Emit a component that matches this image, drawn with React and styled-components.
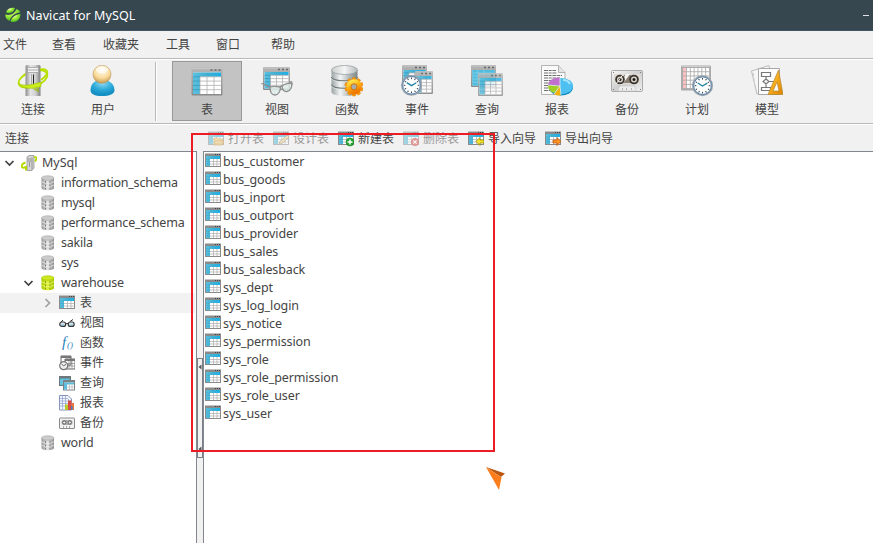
import React from 'react';
import styled, { createGlobalStyle } from 'styled-components';

const GlobalStyle = createGlobalStyle`
  * { box-sizing: border-box; }
  body { margin: 0; overflow: hidden; background: #fff; }
`;

const uiFont = `'Noto Sans', 'Noto Sans CJK SC', sans-serif`;

const Window = styled.div`
  position: relative;
  width: 873px;
  height: 543px;
  display: flex;
  flex-direction: column;
  overflow: hidden;
  background: #f1f1f1;
  color: #444;
  font: 12px/18px ${uiFont};
  white-space: nowrap;
`;

const TitleBar = styled.header`
  height: 31px;
  flex: none;
  display: flex;
  align-items: center;
  padding: 0 4px 0 5px;
  gap: 5px;
  background: #37474f;
  border-bottom: 1px solid #3c5560;
  color: #fff;
`;

const Title = styled.h1`
  flex: 1;
  margin: 0;
  padding-top: 2px;
  font-size: 12.5px;
  font-weight: 400;
  letter-spacing: 0.08px;
`;

const Minimize = styled.span`
  width: 6px;
  height: 1px;
  background: #dfe3e5;
`;

const MenuBar = styled.nav`
  height: 29px;
  flex: none;
  display: flex;
  align-items: center;
  gap: 24px;
  padding: 0 3px 1px;
  border-bottom: 1px solid #fff;
  box-shadow: inset 0 -1px #b9b9b9;
`;

const MenuItem = styled.span`
  width: ${(p) => p.$width}px;
  flex: none;
`;

const ToolBar = styled.div`
  height: 65px;
  flex: none;
  display: flex;
  align-items: flex-start;
  padding: 1px 0 0;
  border-bottom: 1px solid #fff;
  box-shadow: inset 0 -1px #b9b9b9;
`;

const ToolButton = styled.button`
  width: 70px;
  height: 60px;
  padding: 3px 0 0;
  display: flex;
  flex-direction: column;
  align-items: center;
  gap: 4px;
  border: 1px solid ${(p) => (p.$active ? '#999' : 'transparent')};
  background: ${(p) => (p.$active ? '#c3c3c3' : 'transparent')};
  color: inherit;
  font: inherit;
`;

const ToolGroup = styled.div`
  display: flex;
  margin-left: ${(p) => p.$offset}px;
`;

const Separator = styled.span`
  width: 2px;
  height: 59px;
  margin: 1px 0 0 17px;
  background: linear-gradient(to right, #b9b9b9 50%, #fff 50%);
`;

const ActionBar = styled.div`
  height: 26px;
  flex: none;
  display: flex;
  align-items: center;
  padding: 1px 0 0 5px;
`;

const PaneTitle = styled.span`
  width: 203px;
`;

const Action = styled.span`
  display: flex;
  align-items: center;
  gap: 4px;
  margin-right: 9px;
  opacity: ${(p) => (p.$disabled ? 0.5 : 1)};
`;

const Workspace = styled.main`
  flex: 1;
  display: flex;
  min-height: 0;
`;

const Tree = styled.aside`
  width: 197px;
  padding-top: 1px;
  background: #fff;
  border-top: 1px solid #828790;
  border-right: 1px solid #828790;
`;

const TreeRow = styled.div`
  width: 195px;
  height: 20px;
  display: flex;
  align-items: center;
  padding-left: ${(p) => 3 + p.$level * 19}px;
  background: ${(p) => (p.$selected ? '#f2f2f2' : 'transparent')};
`;

const Toggle = styled.span`
  width: 18px;
  height: 14px;
  display: flex;
`;

const Label = styled.span`
  margin-left: ${(p) => p.$gap}px;
  font-size: ${(p) => (p.$cjk ? 12 : 12.5)}px;
  letter-spacing: ${(p) => p.$tracking || 0}px;
`;

const Splitter = styled.div`
  width: 6px;
  display: flex;
  padding-top: 207px;
`;

const Grip = styled.div`
  width: 6px;
  height: 100px;
  display: flex;
  flex-direction: column;
  justify-content: space-between;
  align-items: center;
  padding: 4px 0;
  border: 1px solid #7b7f86;
`;

const TableList = styled.section`
  flex: 1;
  padding: 1px 0 0 1px;
  background: #fff;
  border-top: 1px solid #828790;
  border-left: 1px solid #828790;
`;

const TableRow = styled.div`
  height: 18px;
  display: flex;
  align-items: center;

  svg { margin-bottom: 2px; }
`;

const HighlightFrame = styled.div`
  position: absolute;
  left: 191px;
  top: 133px;
  width: 304px;
  height: 319px;
  border: 2px solid #ed1c24;
`;

const Pointer = styled.svg`
  position: absolute;
  left: 485px;
  top: 465px;
`;

const Svg = styled.svg`
  display: block;
  flex: none;
`;

const HiddenDefs = styled.svg`
  position: absolute;
`;

const Grad = ({ id, stops, ...rest }) => (
  <linearGradient id={id} {...rest}>
    {stops.map((c, i) => (
      <stop key={i} offset={i / (stops.length - 1)} stopColor={c} />
    ))}
  </linearGradient>
);

const Defs = () => (
  <HiddenDefs width="0" height="0">
    <defs>
      <Grad id="blue" stops={['#5cc0de', '#3fafd3', '#1bb0e8']} x2="1" y2="0" />
      <Grad id="steel" stops={['#9aa2a2', '#f4f6f6', '#b3baba', '#7c8484']} x2="1" y2="0" />
      <Grad id="cap" stops={['#c9cdcd', '#f4f5f5', '#b5bbbb']} x2="1" y2="0" />
      <Grad id="server" stops={['#8e8e8e', '#e4e4e4', '#d0d0d0', '#808080']} x2="1" y2="0" />
      <Grad id="gear" stops={['#ffe34a', '#ffab0a', '#f07800']} x1="0.2" y1="0" x2="0.6" y2="1" />
      <Grad id="lime" stops={['#a9c800', '#e0f040', '#a4c400']} x2="1" y2="0" />
      <Grad id="grayDb" stops={['#969696', '#e6e6e6', '#8c8c8c']} x2="1" y2="0" />
      <Grad id="tape" stops={['#f8f8f8', '#cfcfcf', '#f0f0f0']} x2="1" y2="1" />
      <Grad id="gold" stops={['#ffd970', '#f5a91c', '#d98200']} x2="1" y2="1" />
      <Grad id="frame" stops={['#b8b8b8', '#8a8a8a']} x2="0" y2="1" />
      <radialGradient id="head" cx="0.5" cy="0.25" r="0.75">
        <stop offset="0" stopColor="#fffdf2" />
        <stop offset="0.6" stopColor="#fbdc9c" />
        <stop offset="1" stopColor="#c59a55" />
      </radialGradient>
      <radialGradient id="body" cx="0.5" cy="0.2" r="0.7">
        <stop offset="0" stopColor="#8fd9f3" />
        <stop offset="0.6" stopColor="#2ba9d8" />
        <stop offset="1" stopColor="#138fc2" />
      </radialGradient>
      <radialGradient id="leaf" cx="0.3" cy="0.2" r="0.95">
        <stop offset="0" stopColor="#f0ffc0" />
        <stop offset="0.45" stopColor="#9bea35" />
        <stop offset="1" stopColor="#25a51c" />
      </radialGradient>
    </defs>
  </HiddenDefs>
);

const Icon = ({ size = 32, top = 0, children }) => (
  <Svg width={size} height={size} viewBox={`0 ${top} ${size} ${size}`}>
    {children}
  </Svg>
);

/* A window with a title strip, blue header cells and a white data grid. */
const Sheet = ({ x, y, w, h, cols = 4, rows = 5, opacity = 1 }) => {
  const iw = w - 3;
  const ih = h - 6.5;
  const cw = iw / cols;
  const rh = ih / rows;
  return (
    <g transform={`translate(${x} ${y})`} opacity={opacity}>
      <rect width={w} height={h} rx="1" fill="url(#frame)" />
      <rect x="0.5" y="0.5" width={w - 1} height="1" fill="#c8c8c8" />
      <path d={`M${w - 12} 2.500h2m2 0h2m2 0h2`} stroke="#666" strokeWidth="1.600" />
      <rect x="1.5" y="5" width={iw} height={ih} fill="#fff" />
      <path d={`M1.5 5h${iw}v${rh}H${1.5 + cw}v${ih - rh}H1.5z`} fill="url(#blue)" />
      {Array.from({ length: cols - 1 }, (_, i) => (
        <path key={i} d={`M${1.5 + cw * (i + 1)} ${5 + rh}v${ih - rh}`} stroke="#b0b0b0" strokeWidth="0.8" />
      ))}
      {Array.from({ length: rows - 1 }, (_, i) => (
        <g key={i}>
          <path d={`M1.5 ${5 + rh * (i + 1)}h${cw}`} stroke="#2b8fb5" strokeWidth="0.6" />
          <path d={`M${1.5 + cw} ${5 + rh * (i + 1)}h${iw - cw}`} stroke="#b0b0b0" strokeWidth="0.8" />
        </g>
      ))}
    </g>
  );
};

const Clock = ({ cx, cy, r }) => (
  <g transform={`translate(${cx} ${cy}) scale(${r / 10})`}>
    <circle r="9.3" fill="#fdfefe" stroke="#98a2aa" strokeWidth="1.4" />
    <circle r="8.4" fill="none" stroke="#4c77a5" strokeWidth="0.9" />
    {Array.from({ length: 12 }, (_, i) => (
      <path key={i} d="M0-7.4v1.5" stroke="#273640" strokeWidth="0.9" transform={`rotate(${i * 30})`} />
    ))}
    <path d="M-4.5-2.6L0 .3L4.6-2.4" fill="none" stroke="#2385a5" strokeWidth="1.3" />
  </g>
);

const ConnectIcon = () => (
  <Icon>
    <ellipse cx="16" cy="14" rx="15" ry="7.5" transform="rotate(-20 16 14)" fill="none" stroke="#b7df00" strokeWidth="1.8" />
    <path d="M8.5 1L9.5 0h13l1 1V31h-15z" fill="url(#server)" />
    <path d="M10.5 2.5h11v5h-11z" fill="#f2f2f2" stroke="#9a9a9a" strokeWidth="0.7" />
    <path d="M10.5 5h11M14.500 9v14" stroke="#999" strokeWidth="0.8" />
    <path d="M16.500 9.500v10" stroke="#222" strokeWidth="1" />
    <path d="M23 4.500C30 3 33 7 27 12.500L24 15" fill="none" stroke="#b7df00" strokeWidth="1.800" />
    <path d="M2 18.500C6 21.500 15 20 24 17v4.500C15 24.500 5 24 2 18.500z" fill="#c9ec1a" stroke="#9cc200" strokeWidth="0.600" />
    <path d="M16.500 24h2.500v2m2-3v4" fill="none" stroke="#8fb800" strokeWidth="1.200" />
  </Icon>
);

const UserIcon = () => (
  <Icon>
    <path d="M3.5 25C4 18 8 15 15 15s12 3 12.500 10c0 4-5 6-12.500 6S3.500 29 3.500 25z" fill="url(#body)" />
    <circle cx="15" cy="9.300" r="9" fill="url(#head)" stroke="#b58e50" strokeWidth="0.500" />
    <ellipse cx="15" cy="5" rx="6" ry="3.500" fill="#fff" opacity="0.600" />
  </Icon>
);

const TableIcon = () => (
  <Icon>
    <Sheet x={0.5} y={2.5} w={31} h={28} />
  </Icon>
);

const ViewIcon = () => (
  <Icon>
    <Sheet x={2} y={2} w={27} h={23} />
    <g fill="#dcebe9" fillOpacity="0.850" stroke="#909090" strokeWidth="1.300">
      <path d="M0.500 19C2 17.500 4 21 9 22M29 17c2-1 2 0 2 3" fill="none" />
      <path d="M9 22c3-1 7-.5 10.500 0c0 4-2 8-5.500 8s-5-4-5-8z" />
      <path d="M21 20.500c3-1.500 6-2.500 9.500-2.500c1 4-1 8-4.500 8.500s-5-2.500-5-6z" />
      <path d="M19 23q1-3 2.500-1.500" fill="none" />
    </g>
  </Icon>
);

const FunctionIcon = () => (
  <Icon>
    <path d="M0.500 5v22c0 5.300 26 5.300 26 0V5z" fill="url(#steel)" />
    <path d="M0.500 12c0 5 26 5 26 0M0.500 19.500c0 5 26 5 26 0" fill="none" stroke="#727a7a" strokeWidth="1.200" />
    <path d="M0.500 13.200c0 5 26 5 26 0M0.500 20.700c0 5 26 5 26 0" fill="none" stroke="#e5e9e9" strokeWidth="0.700" />
    <ellipse cx="13.500" cy="5" rx="13" ry="4.500" fill="url(#cap)" stroke="#929999" strokeWidth="0.700" />
    <g transform="translate(23 21.800)">
      {Array.from({ length: 10 }, (_, i) => (
        <rect key={i} x="-1.700" y="-9.300" width="3.400" height="4" rx="0.700" fill="#f89a0b" stroke="#df7700" strokeWidth="0.400" transform={`rotate(${i * 36})`} />
      ))}
      <circle r="5.400" fill="none" stroke="url(#gear)" strokeWidth="4.500" />
      <circle r="3" fill="#a6adaf" stroke="#d76b00" strokeWidth="0.900" />
    </g>
  </Icon>
);

const EventIcon = () => (
  <Icon>
    <Sheet x={1} y={0} w={25} h={21} />
    <Sheet x={14} y={6} w={18} h={23} cols={3} opacity={0.9} />
    <Clock cx={10.5} cy={20.3} r={10.5} />
  </Icon>
);

const QueryIcon = () => (
  <Icon>
    <Sheet x={0} y={0} w={25} h={22} />
    <path d="M1.500 5h22v15.500h-22z" fill="#52bcdd" />
    <path d="M1.500 8h22M1.500 11h22M1.500 14h22M1.500 17h22M7 5v15M13 5v15" stroke="#94d8ec" strokeWidth="0.600" />
    <Sheet x={7} y={8} w={25} h={23} opacity={0.8} />
  </Icon>
);

const ReportIcon = () => (
  <Icon>
    <path d="M0.500 0.500h17l6.500 7v22H0.500z" fill="#fafafa" stroke="#b4b4b4" />
    <path d="M17.500 0.500v7H24" fill="#e4e4e4" stroke="#999" strokeWidth="0.700" />
    <path d="M3 5.500h12M3 8h13M3 10.500h18M3 13h16M3 15.500h7M3 18h5M3 20.500h5M3 23h6M3 25.500h7" stroke="#707070" strokeWidth="1" strokeDasharray="4 0.700 3 0.700" />
    <ellipse cx="20" cy="22.500" rx="12" ry="8" fill="#168fc5" />
    <ellipse cx="20" cy="21" rx="12" ry="8" fill="#4dbff0" />
    <path d="M19 21V12.500C12 12.500 7 16 7 20z" fill="#c070cf" />
    <path d="M19 21L7 20c0 4 2 6.500 6 8z" fill="#a0d024" />
    <path d="M19 21l-6 8c2 1.500 5 1.700 6.500 1.500z" fill="#f2b20d" />
    <path d="M19 12.500V21L7 20M19 21l-6 8M19 21l1 9" fill="none" stroke="#fff" strokeWidth="0.600" />
    <path d="M22 15q5 0 7 4" fill="none" stroke="#a6e4fc" strokeWidth="2" />
  </Icon>
);

const BackupIcon = () => (
  <Icon>
    <rect x="0.500" y="5.500" width="31" height="21" rx="1" fill="url(#tape)" stroke="#aaa" />
    <path d="M3 9h26v10H3z" fill="#dedad4" />
    <path d="M13 10h7v8h-7z" fill="#8a8174" />
    <path d="M8 20L15 9h4l-8 11z" fill="#f4f4f4" />
    {[9, 23].map((cx) => (
      <g key={cx}>
        <circle cx={cx} cy="14.500" r="4.800" fill="#3a342e" />
        <circle cx={cx} cy="14.500" r="3" fill="#d8d3ca" />
        <circle cx={cx} cy="14.500" r="1.500" fill="#1c1a18" />
      </g>
    ))}
    <path d="M5 19l4-5M12 9.500l-3 4" stroke="#eee" />
    <path d="M7 26l1.500-5h15l1.500 5z" fill="#ededed" stroke="#c4c4c4" strokeWidth="0.600" />
    <path d="M11 24h1m3 0h1m4 0h1M2 7.500h1m26 0h1M2 24.500h1m26 0h1" stroke="#777" strokeWidth="1.200" />
  </Icon>
);

const ScheduleIcon = () => (
  <Icon>
    <rect x="0" y="0.500" width="30" height="25" rx="1" fill="#ababab" />
    <path d="M1 1.500h28" stroke="#ccc" />
    {Array.from({ length: 5 }, (_, r) =>
      Array.from({ length: 7 }, (_, c) => (
        <rect key={`${r}-${c}`} x={2 + c * 3.85} y={3 + r * 4.2} width="3" height="3.3" fill={c ? '#fff' : '#ffc0c3'} />
      ))
    )}
    <Clock cx={21.5} cy={20.7} r={10.5} />
  </Icon>
);

const ModelIcon = () => (
  <Icon>
    <path d="M0.500 6L18 0.500l5 25L6 29z" fill="#f6f6f6" stroke="#bbb" />
    <path d="M2.500 8v3m.5 2v3m.5 2v3" stroke="#ccc" />
    <path d="M7.500 3.500h21v26h-21z" fill="#fcfcfc" stroke="#a8a8a8" />
    <path d="M10.500 7.500h9v4h-9zM15 11.500v2.500m0 5v3.500M10.500 22.500h9v3h-9zM15 14l3 2.500l-3 2.500l-3-2.500zM18 16.500h5" fill="none" stroke="#777" strokeWidth="1.200" />
    <path fillRule="evenodd" d="M27.500 5L32 29.500H17zM26 17l-4 9h6z" fill="url(#gold)" stroke="#b8862e" strokeWidth="0.700" />
  </Icon>
);

/* 16px glyphs used by the tree, the list and the action bar. */
const SmallSheet = ({ children }) => (
  <Icon size={16} top={1}>
    <path d="M0 1h16v14H0z" fill="#8a8a8a" />
    <path d="M0 1h16v1H0z" fill="#c3c3c3" />
    <path d="M10 2.500h1m1 0h1m1 0h1" stroke="#444" strokeWidth="1" />
    <path d="M1 4h14v10H1z" fill="#fff" />
    <path d="M1 4h14v3H5v7H1z" fill="url(#blue)" />
    <path d="M5 9.500h10M5 12h10M8.500 7v7M12 7v7" stroke="#b4b4b4" strokeWidth="0.800" />
    <path d="M1 7h4M1 9.500h4M1 12h4" stroke="#3a9fc0" strokeWidth="0.500" />
    {children}
  </Icon>
);

const badges = {
  open: <path d="M6 8h4l1 1h4v5H6zM7 11h9l-1.500 4H6z" fill="#f3cd74" stroke="#b98a32" strokeWidth="0.700" />,
  design: <path d="M6 14.500l1-3L14 5l2 2l-7 6.500z" fill="#ead18a" stroke="#8d795b" strokeWidth="0.800" />,
  create: (
    <g>
      <circle cx="12" cy="12" r="4" fill="#27a32f" stroke="#137b1c" strokeWidth="0.500" />
      <path d="M12 9.500v5M9.500 12h5" stroke="#fff" strokeWidth="1.400" />
    </g>
  ),
  remove: (
    <g>
      <circle cx="12" cy="12" r="3.800" fill="#d84040" stroke="#a92c2c" strokeWidth="0.500" />
      <path d="M10.300 10.300l3.400 3.400m0-3.400l-3.400 3.400" stroke="#fff" strokeWidth="1.200" />
    </g>
  ),
  importing: <path d="M8 11.500l4-4v2.500h4v3h-4v2.500z" fill="#f4e42c" stroke="#8c8200" strokeWidth="0.700" />,
  exporting: <path d="M16 11.500l-4-4v2.500H8v3h4v2.500z" fill="#ff9425" stroke="#b44b00" strokeWidth="0.700" />,
};

const Database = ({ active }) => (
  <Icon size={16}>
    <path d="M1.500 3v10c0 3 12.500 3 12.500 0V3z" fill={active ? 'url(#lime)' : 'url(#grayDb)'} />
    <ellipse cx="7.750" cy="3" rx="6.250" ry="2.200" fill={active ? '#cfe81f' : '#ccc'} stroke={active ? '#a8c900' : '#aaa'} strokeWidth="0.700" />
    <path d="M1.500 6.500c2 2 10.500 2 12.500 0M1.500 10c2 2 10.500 2 12.500 0" fill="none" stroke={active ? '#f2ff94' : '#f3f3f3'} strokeWidth="0.700" />
    <path d="M5.500 6v8.500M10 6v8.500" stroke={active ? '#7f9f00' : '#777'} strokeWidth="0.900" strokeDasharray="2 1.500" />
  </Icon>
);

const Server = () => (
  <Icon size={16}>
    <path d="M6 2l2-1.500h5V13l-2 2.500H6z" fill="#d4d4d4" stroke="#888" strokeWidth="0.700" />
    <path d="M6.500 4h4M6.500 6h4M8.500 7v5M11 2.500v12" stroke="#888" strokeWidth="0.800" />
    <path d="M4.500 7.500C1 8.500 0 11 1 12s3 .5 4 0v3.500" fill="none" stroke="#b5d900" strokeWidth="2" />
    <path d="M13 2.500c3-1.500 3 1 1 4" fill="none" stroke="#b5d900" strokeWidth="1.800" />
  </Icon>
);

const Glasses = () => (
  <Icon size={16}>
    <path d="M1 8l3-3M11 6.500l3-2M7 9q1-1.500 2 0" fill="none" stroke="#333" strokeWidth="1" />
    <rect x="0.800" y="7" width="5.800" height="4.400" rx="2" fill="#ddeaf0" stroke="#333" strokeWidth="1.200" />
    <rect x="9.300" y="7" width="5.800" height="4.400" rx="2" fill="#ddeaf0" stroke="#333" strokeWidth="1.200" />
    <path d="M2 10h3M11 10h3" stroke="#73afd0" />
  </Icon>
);

const FxText = styled.text`
  font: italic ${(p) => p.$size}px 'Liberation Serif', serif;
  fill: #2b83bd;
`;

const Fx = () => (
  <Icon size={16}>
    <FxText x="3" y="12" $size={15}>f</FxText>
    <FxText x="8" y="13" $size={9}>()</FxText>
  </Icon>
);

const SmallEvent = () => (
  <Icon size={16}>
    <path d="M2 1h10v9H2zM6 4h10v10H6z" fill="#fff" stroke="#666" />
    <path d="M2 2h10M6 5h10" stroke="#777" strokeWidth="2" />
    <path d="M8 8.500h8M8 11h8M10 6v8M13 6v8" stroke="#888" strokeWidth="0.700" />
    <circle cx="4.700" cy="10.700" r="4" fill="#eee" stroke="#777" strokeWidth="1.200" />
    <path d="M2.500 9l2 1.700L7 9.500" fill="none" stroke="#444" strokeWidth="0.800" />
  </Icon>
);

const SmallQuery = () => (
  <Icon size={16}>
    <path d="M0 1h12v10H0z" fill="#6e7779" />
    <path d="M1 3.500h10V10H1z" fill="#56bcda" />
    <path d="M1 5.500h10M1 8h10M4 3.500V10M8 3.500V10" stroke="#97dced" strokeWidth="0.500" />
    <path d="M4 5h12v10.500H4z" fill="#788184" />
    <path d="M5 7.500h10v7H5z" fill="#fff" />
    <path d="M5 7.500h10v2H8v5H5z" fill="#5dbddb" />
    <path d="M8 12h7M10.500 9.500v5M13 9.500v5" stroke="#aaa" strokeWidth="0.600" />
  </Icon>
);

const SmallReport = () => (
  <Icon size={16}>
    <path d="M.5 .5h8.500l3.500 3.500v11H.5z" fill="#f3f6fc" stroke="#8795bc" />
    <path d="M1 3.500h8M1 6h11M1 8.500h11M1 11h8M3.500 1v13M6.500 1v13M9.500 4v11" stroke="#9aaad0" strokeWidth="0.800" />
    <path d="M6 9.500h3V15H6z" fill="#b5c82c" />
    <path d="M9 5.500h3.500V15H9z" fill="#d94d45" />
    <path d="M12.500 8H15v7h-2.500z" fill="#e7773e" />
    <path d="M12 11h1.500v4H12z" fill="#3e80c8" />
  </Icon>
);

const SmallBackup = () => (
  <Icon size={16}>
    <rect x="0.500" y="3" width="15" height="10.500" rx="0.500" fill="#f2f2f2" stroke="#8a8a8a" />
    <rect x="2.500" y="5" width="11" height="5" rx="2" fill="#aaa" />
    <circle cx="5.200" cy="7.500" r="1.600" fill="#eee" stroke="#555" strokeWidth="0.900" />
    <circle cx="10.800" cy="7.500" r="1.600" fill="#eee" stroke="#555" strokeWidth="0.900" />
    <path d="M4 12h1m2 0h1m2 0h1" stroke="#666" />
  </Icon>
);

const Logo = () => (
  <Icon size={16}>
    <path d="M1 5.500C2 1.500 6 0 10 1C9 5 5 7.500 1 5.500z" fill="url(#leaf)" />
    <path d="M.3 7.500C6 9 10 6 11.500 2C14 3 15 4 15.300 5.500C10 6 6 9 4.500 14C1.500 12.500 0 10 .3 7.500z" fill="url(#leaf)" />
    <path d="M5.500 14.500C6.500 10.500 10 7.500 15.500 7C15.500 12.500 10.500 16.500 5.500 14.500z" fill="url(#leaf)" />
  </Icon>
);

const Chevron = ({ open }) => (
  <Svg width="14" height="14" viewBox="0 0 14 14">
    <path
      d={open ? 'M2.500 5L6.500 9L10.500 5' : 'M4.500 3L8.500 7L4.500 11'}
      fill="none"
      stroke={open ? '#404040' : '#a0a0a0'}
      strokeWidth="1.700"
    />
  </Svg>
);

const GripArrow = () => (
  <Svg width="4" height="8" viewBox="0 0 4 8">
    <path d="M3.500 1.500v5L.5 4z" fill="#555" />
  </Svg>
);

const menus = [['文件', 25], ['查看', 27], ['收藏夹', 39], ['工具', 26], ['窗口', 31], ['帮助', 24]];
const connectTools = [['连接', ConnectIcon], ['用户', UserIcon]];
const objectTools = [
  ['表', TableIcon], ['视图', ViewIcon], ['函数', FunctionIcon], ['事件', EventIcon], ['查询', QueryIcon],
  ['报表', ReportIcon], ['备份', BackupIcon], ['计划', ScheduleIcon], ['模型', ModelIcon],
];
const actions = [
  ['打开表', 'open', true], ['设计表', 'design', true], ['新建表', 'create'],
  ['删除表', 'remove', true], ['导入向导', 'importing'], ['导出向导', 'exporting'],
];
const tree = [
  { label: 'MySql', level: 0, icon: Server, open: true },
  ...['information_schema', 'mysql', 'performance_schema', 'sakila', 'sys'].map((label) => ({ label, level: 1, icon: Database })),
  { label: 'warehouse', level: 1, icon: Database, open: true },
  { label: '表', level: 2, icon: SmallSheet, open: false, selected: true },
  { label: '视图', level: 2, icon: Glasses },
  { label: '函数', level: 2, icon: Fx },
  { label: '事件', level: 2, icon: SmallEvent },
  { label: '查询', level: 2, icon: SmallQuery },
  { label: '报表', level: 2, icon: SmallReport },
  { label: '备份', level: 2, icon: SmallBackup },
  { label: 'world', level: 1, icon: Database },
];
const tables = [
  'bus_customer', 'bus_goods', 'bus_inport', 'bus_outport', 'bus_provider', 'bus_sales', 'bus_salesback', 'sys_dept',
  'sys_log_login', 'sys_notice', 'sys_permission', 'sys_role', 'sys_role_permission', 'sys_role_user', 'sys_user',
];

export default function App() {
  return (
    <Window>
      <GlobalStyle />
      <Defs />
      <TitleBar>
        <Logo />
        <Title>Navicat for MySQL</Title>
        <Minimize />
      </TitleBar>
      <MenuBar>
        {menus.map(([label, width]) => (
          <MenuItem key={label} $width={width}>{label}</MenuItem>
        ))}
      </MenuBar>
      <ToolBar>
        <ToolGroup $offset={-2}>
          {connectTools.map(([label, Glyph]) => (
            <ToolButton key={label}><Glyph />{label}</ToolButton>
          ))}
        </ToolGroup>
        <Separator />
        <ToolGroup $offset={15}>
          {objectTools.map(([label, Glyph], i) => (
            <ToolButton key={label} $active={i === 0}><Glyph />{label}</ToolButton>
          ))}
        </ToolGroup>
      </ToolBar>
      <ActionBar>
        <PaneTitle>连接</PaneTitle>
        {actions.map(([label, badge, disabled]) => (
          <Action key={label} $disabled={disabled}>
            <SmallSheet>{badges[badge]}</SmallSheet>
            {label}
          </Action>
        ))}
      </ActionBar>
      <Workspace>
        <Tree>
          {tree.map(({ label, level, icon: Glyph, open, selected }) => (
            <TreeRow key={label} $level={level} $selected={selected}>
              <Toggle>{open !== undefined && <Chevron open={open} />}</Toggle>
              <Glyph active={open} />
              <Label $gap={5} $cjk={level === 2} $tracking={level === 1 ? -0.22 : 0}>{label}</Label>
            </TreeRow>
          ))}
        </Tree>
        <Splitter>
          <Grip>
            <GripArrow />
            <GripArrow />
          </Grip>
        </Splitter>
        <TableList>
          {tables.map((name) => (
            <TableRow key={name}>
              <SmallSheet />
              <Label $gap={2} $tracking={-0.11}>{name}</Label>
            </TableRow>
          ))}
        </TableList>
      </Workspace>
      <HighlightFrame />
      <Pointer width="21" height="27" viewBox="0 0 21 27">
        <path d="M1 2L20 8.500L16 12z" fill="#b9560f" />
        <path d="M1 2L16.500 12.500L14 25z" fill="#fb7d1b" />
      </Pointer>
    </Window>
  );
}
